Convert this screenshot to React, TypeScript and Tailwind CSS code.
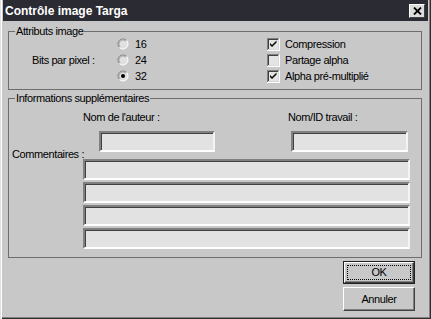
import * as React from 'react'

const font = { fontFamily: '"Liberation Sans", Arial, sans-serif' }

function Radio({ checked }: { checked?: boolean }) {
  return (
    <svg width="12" height="12" viewBox="0 0 12 12" className="shrink-0">
      <circle cx="6" cy="6" r="5" fill="#e0e0e0" />
      <path d="M2.46 9.54 A5 5 0 0 1 9.54 2.46" fill="none" stroke="#808080" strokeWidth="1" />
      <path d="M9.54 2.46 A5 5 0 0 1 2.46 9.54" fill="none" stroke="#ffffff" strokeWidth="1" />
      <path d="M3.17 8.83 A4 4 0 0 1 8.83 3.17" fill="none" stroke="#a8a8a8" strokeWidth="1" />
      {checked && <circle cx="6" cy="6" r="2" fill="#000" />}
    </svg>
  )
}

function Check({ checked }: { checked?: boolean }) {
  return (
    <svg width="13" height="13" viewBox="0 0 13 13" className="shrink-0">
      <rect x="0" y="0" width="13" height="13" fill="#ffffff" />
      <rect x="0" y="0" width="12" height="12" fill="#808080" />
      <rect x="1" y="1" width="11" height="11" fill="#d8d8d8" />
      <rect x="1" y="1" width="10" height="10" fill="#404040" />
      <rect x="2" y="2" width="9" height="9" fill="#e4e4e4" />
      {checked && (
        <path d="M3 5 L5 7 L9.5 2.5 L9.5 4.5 L5 9 L3 7 Z" fill="#000" />
      )}
    </svg>
  )
}

function Field({ className }: { className: string }) {
  return (
    <div
      className={`h-[21px] bg-[#e2e2e2] border-t-2 border-l-2 border-b-2 border-r-2 border-t-[#808080] border-l-[#808080] border-b-white border-r-[#f4f4f4] shadow-[inset_1px_1px_0_#404040] ${className}`}
    />
  )
}

export default function App() {
  return (
    <div
      style={font}
      className="w-[431px] h-[319px] bg-[#c8c8c8] flex flex-col px-[3px] text-[11px] tracking-[-0.4px] text-black shadow-[inset_1px_0_0_#e0e0e0,inset_2px_0_0_#ffffff,inset_-1px_-1px_0_#303030,inset_-2px_-2px_0_#808080]"
    >
      {/* title bar */}
      <div className="h-[21px] bg-[#2b2b33] flex items-center justify-between pl-[2px] pr-[3px]">
        <span className="text-white font-bold text-[12px] tracking-normal">Contrôle image Targa</span>
        <div className="w-[16px] h-[14px] bg-[#dcdcdc] flex items-center justify-center border-t border-l border-white border-b border-r border-b-[#404040] border-r-[#404040]">
          <svg width="9" height="8" viewBox="0 0 9 8">
            <path d="M1 0.5 L8 7.5 M8 0.5 L1 7.5" stroke="#000" strokeWidth="1.8" />
          </svg>
        </div>
      </div>

      <div className="flex flex-col pl-[5px] pr-[6px] mt-[4px]">
        {/* Attributs image */}
        <fieldset className="border border-[#6e6e6e] pb-[5px]">
          <legend className="ml-[6px] px-[1px] leading-[13px]">Attributs image</legend>
          <div className="flex -mt-[2px]">
            <div className="w-[108px] flex items-center pl-[23px]">Bits par pixel :</div>
            <div className="w-[150px] flex flex-col">
              {[['16', false], ['24', false], ['32', true]].map(([v, c]) => (
                <div key={v as string} className="h-[16px] flex items-center gap-[6px]">
                  <Radio checked={c as boolean} />
                  <span>{v as string}</span>
                </div>
              ))}
            </div>
            <div className="flex flex-col">
              {[['Compression', true], ['Partage alpha', false], ['Alpha pré-multiplié', true]].map(([v, c]) => (
                <div key={v as string} className="h-[16px] flex items-center gap-[5px]">
                  <Check checked={c as boolean} />
                  <span>{v as string}</span>
                </div>
              ))}
            </div>
          </div>
        </fieldset>

        {/* Informations supplémentaires */}
        <fieldset className="border border-[#6e6e6e] mt-[2px] pb-[8px]">
          <legend className="ml-[6px] px-[1px] leading-[13px]">Informations supplémentaires</legend>
          <div className="flex mt-[5px] h-[14px] items-center">
            <span className="ml-[74px] w-[205px]">Nom de l'auteur :</span>
            <span>Nom/ID travail :</span>
          </div>
          <div className="flex mt-[7px]">
            <Field className="ml-[90px] w-[116px]" />
            <Field className="ml-[76px] w-[117px]" />
          </div>
          <div className="flex mt-[7px]">
            <div className="w-[74px] shrink-0 pl-[3px] -mt-[13px] whitespace-nowrap">Commentaires :</div>
            <div className="flex flex-col gap-[2px]">
              <Field className="w-[327px]" />
              <Field className="w-[327px]" />
              <Field className="w-[327px]" />
              <Field className="w-[327px]" />
            </div>
          </div>
        </fieldset>

        {/* buttons */}
        <div className="self-end mr-[7px] mt-[3px] flex flex-col gap-[3px]">
          <div className="w-[72px] h-[23px] border border-[#202020]">
            <div className="w-full h-full flex items-center justify-center border-t border-l border-white border-b border-r border-b-[#404040] border-r-[#404040] shadow-[inset_-1px_-1px_0_#808080] p-[2px]">
              <div className="w-full h-full border border-dotted border-black flex items-center justify-center">
                OK
              </div>
            </div>
          </div>
          <div className="w-[72px] h-[24px] flex items-center justify-center border-t border-l border-white border-b border-r border-b-[#404040] border-r-[#404040] shadow-[inset_-1px_-1px_0_#808080]">
            Annuler
          </div>
        </div>
      </div>
    </div>
  )
}
